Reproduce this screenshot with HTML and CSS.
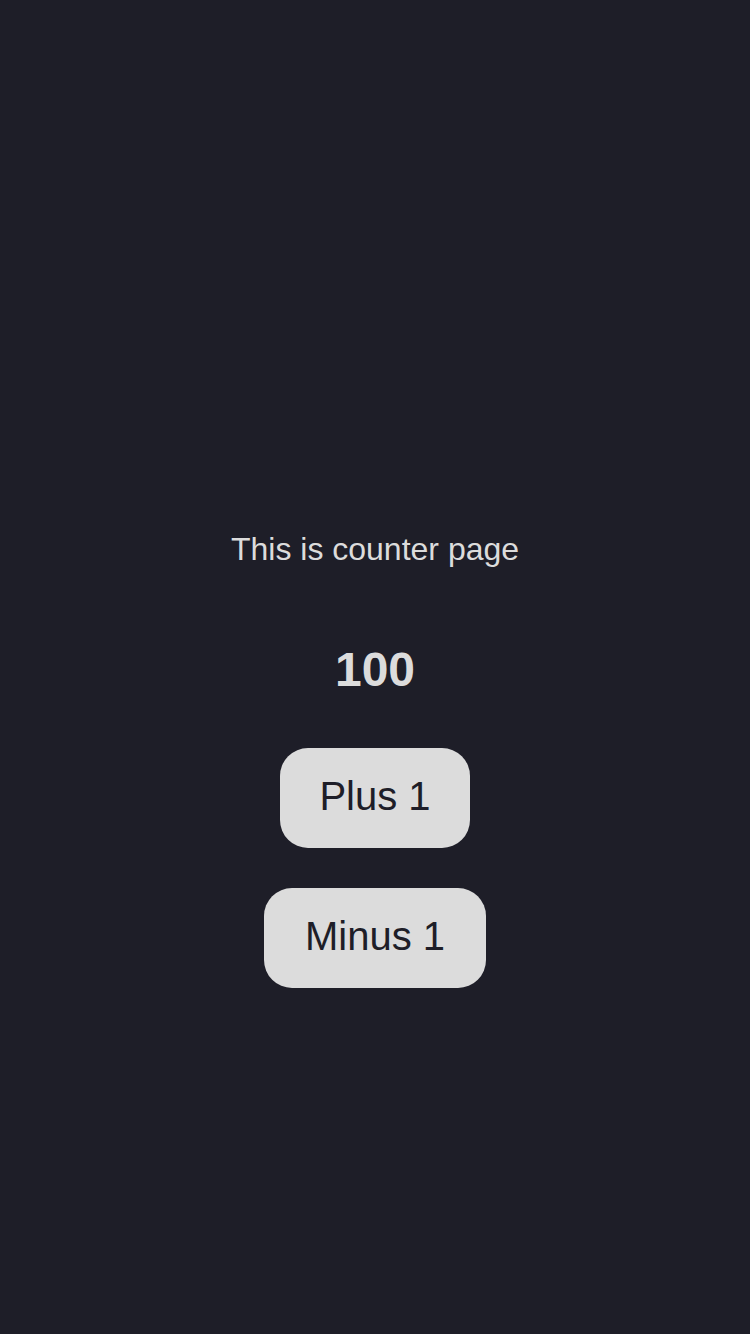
FILE: index.html
```html
<!DOCTYPE html>
<html lang="en">
<head>
<meta charset="utf-8">
<title>Counter</title>
<link rel="stylesheet" href="styles.css">
</head>
<body>
<main class="page">
  <p class="title">This is counter page</p>
  <div class="count">100</div>
  <div class="actions">
    <button class="btn btn-plus" type="button">Plus 1</button>
    <button class="btn btn-minus" type="button">Minus 1</button>
  </div>
</main>
</body>
</html>
```

FILE: styles.css
```css
html, body {
  margin: 0;
  padding: 0;
  background: #1e1e28;
}
body {
  font-family: "Liberation Sans", Arial, sans-serif;
  color: #dcdcdc;
}
.page {
  box-sizing: border-box;
  min-height: 1334px;
  padding-top: 529px;
  display: flex;
  flex-direction: column;
  align-items: center;
}
.title {
  margin: 0;
  font-size: 32px;
  line-height: 40px;
}
.count {
  margin-top: 73px;
  font-size: 48px;
  line-height: 56px;
  font-weight: bold;
}
.actions {
  margin-top: 50px;
  display: flex;
  flex-direction: column;
  align-items: center;
  gap: 40px;
}
.btn {
  box-sizing: border-box;
  height: 100px;
  padding: 0 0 4px;
  border: none;
  border-radius: 28px;
  background: #dcdcdc;
  color: #1e1e28;
  font-family: "Liberation Sans", Arial, sans-serif;
  font-size: 40px;
  line-height: 46px;
}
.btn-plus {
  width: 190px;
}
.btn-minus {
  width: 222px;
}
```
